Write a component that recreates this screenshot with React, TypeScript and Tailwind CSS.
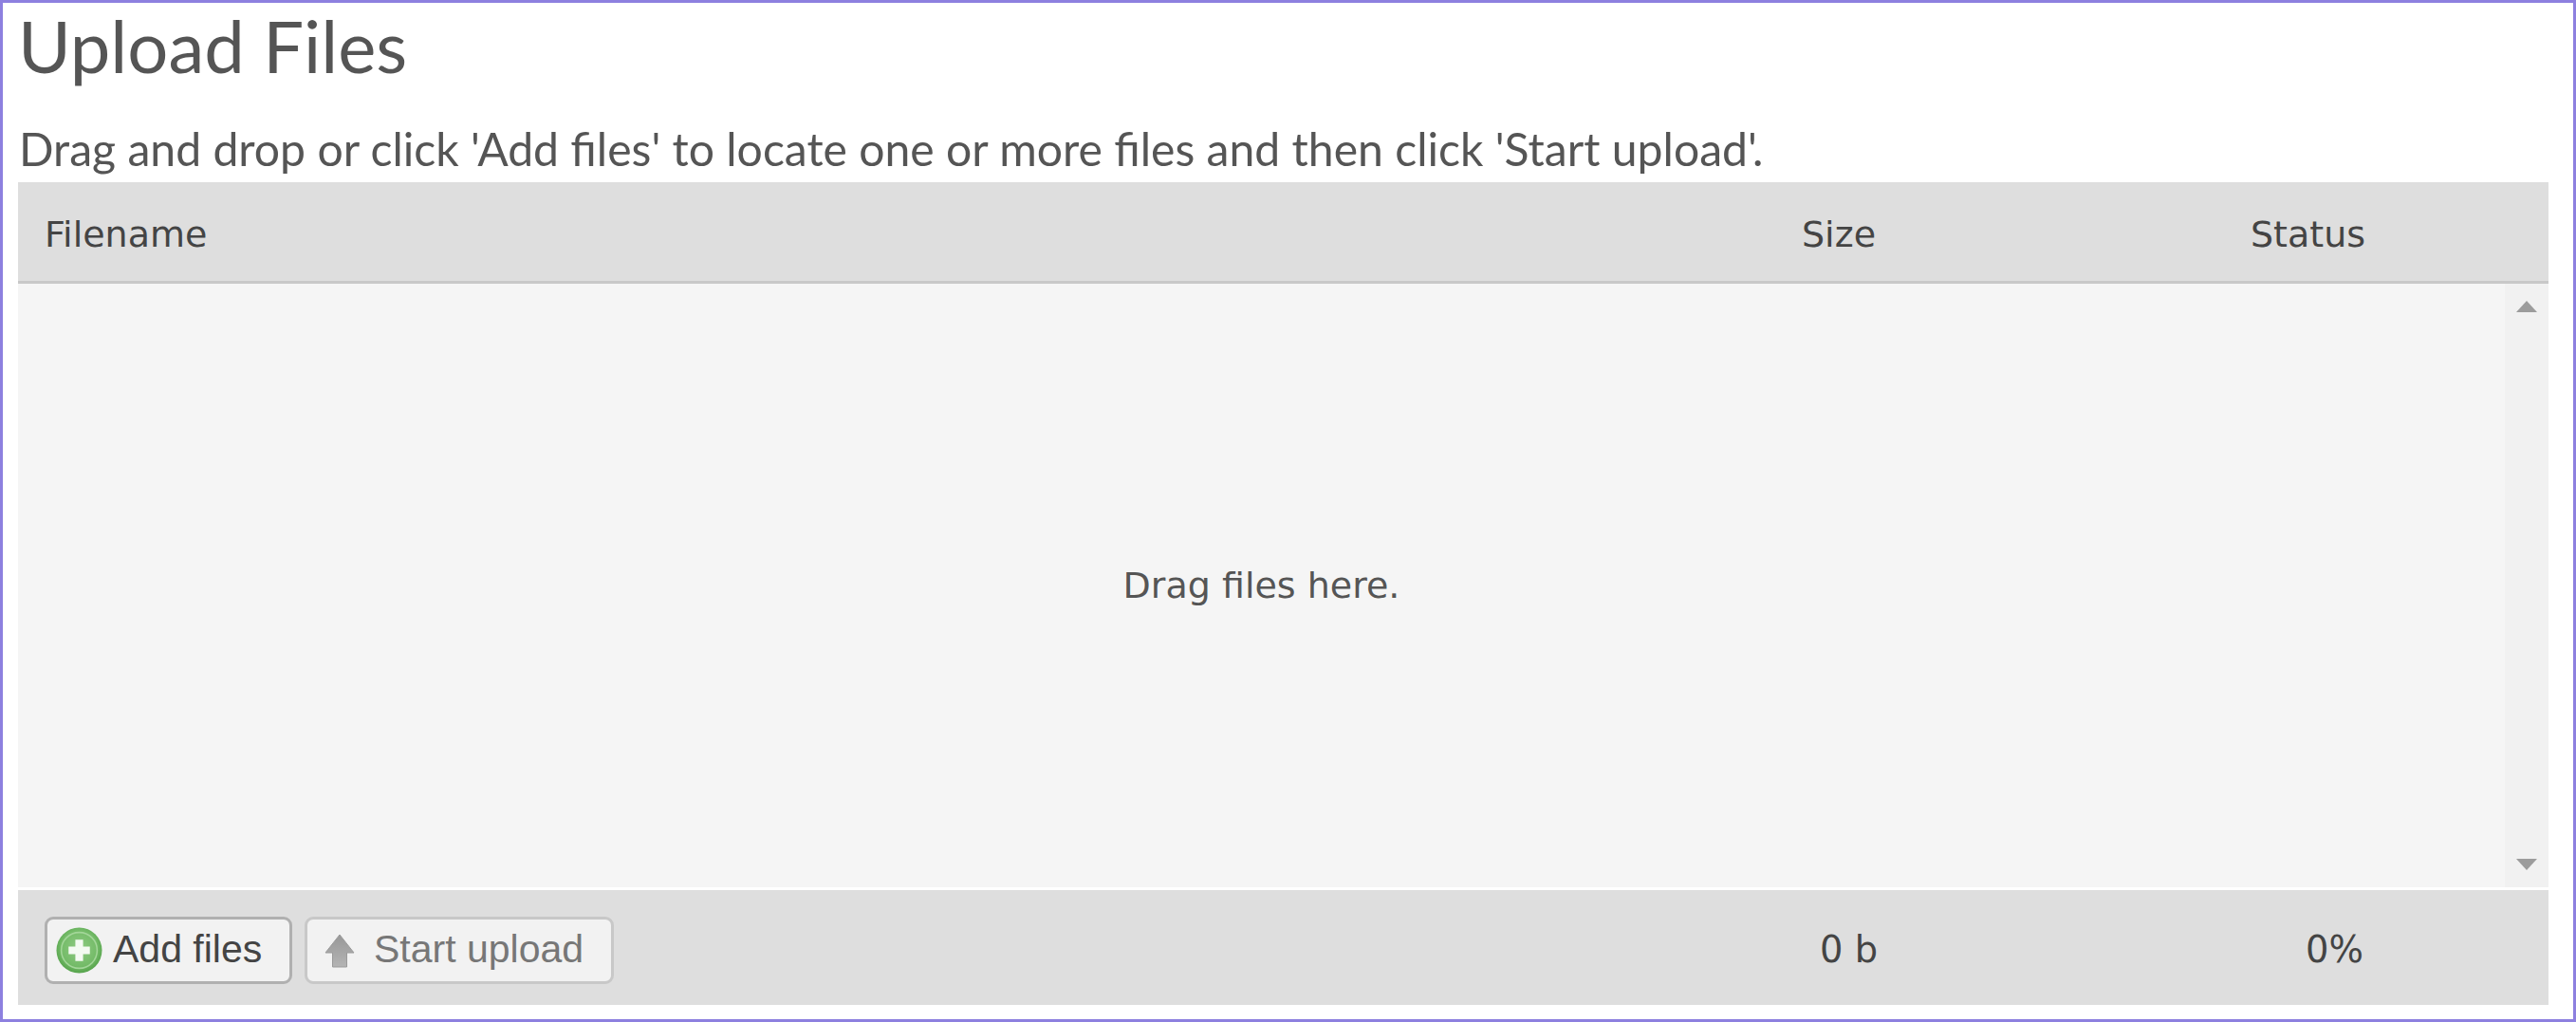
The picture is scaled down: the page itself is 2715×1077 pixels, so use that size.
import React from "react";

function AddIcon() {
  return (
    <svg width="49" height="49" viewBox="0 0 48 48" className="shrink-0 blur-[0.4px]">
      <defs>
        <radialGradient id="addFill" cx="50%" cy="45%" r="55%">
          <stop offset="0%" stopColor="#8fcb83" />
          <stop offset="72%" stopColor="#74bb68" />
          <stop offset="100%" stopColor="#55a34b" />
        </radialGradient>
      </defs>
      <circle cx="24" cy="24" r="23.5" fill="url(#addFill)" />
      <circle cx="24" cy="24" r="18.5" fill="none" stroke="#a3d699" strokeWidth="1.5" />
      <path d="M20 13h8v7h7v8h-7v7h-8v-7h-7v-8h7z" fill="#f4faf2" />
    </svg>
  );
}

function UploadIcon() {
  return (
    <svg width="32" height="36" viewBox="0 0 32 36" className="shrink-0 blur-[0.5px]">
      <defs>
        <linearGradient id="uploadFill" x1="0" y1="0" x2="0" y2="1">
          <stop offset="0%" stopColor="#979797" />
          <stop offset="100%" stopColor="#b4b4b4" />
        </linearGradient>
      </defs>
      <path d="M16 1 L31 20 H23.5 V35 H8.5 V20 H1 Z" fill="url(#uploadFill)" stroke="#9a9a9a" strokeWidth="1" strokeLinejoin="round" />
    </svg>
  );
}

function Triangle({ down }: { down?: boolean }) {
  return (
    <svg width="22" height="12" viewBox="0 0 22 12">
      <path d={down ? "M0 0H22L11 12Z" : "M11 0L22 12H0Z"} fill="#9c9c9c" />
    </svg>
  );
}

export default function App() {
  return (
    <div className="flex h-[1077px] w-full flex-col border-[3px] border-[#8d80df] bg-white pl-4 pr-[26px] text-[#555555]">
      <h1 className="h-[122px] font-['Lato',sans-serif] text-[76px] leading-[90px]">
        Upload Files
      </h1>
      <p className="h-[67px] pl-px font-['Lato',sans-serif] text-[48.1px] leading-[63px]">
        Drag and drop or click 'Add files' to locate one or more files and then click 'Start upload'.
      </p>
      <div className="flex h-[107px] items-center border-b-[3px] border-[#c8c8c8] bg-[#dedede] pt-[6px] font-['DejaVu_Sans',sans-serif] text-[38px] text-[#444444]">
        <div className="flex-1 pl-7">Filename</div>
        <div className="w-[473px]">Size</div>
        <div className="w-[314px]">Status</div>
      </div>
      <div className="flex h-[636px] bg-[#f5f5f5]">
        <div className="flex flex-1 items-center justify-center font-['DejaVu_Sans',sans-serif] text-[38px] text-[#555555]">
          Drag files here.
        </div>
        <div className="flex w-[46px] flex-col items-center justify-between bg-[#f1f1f1] py-[18px]">
          <Triangle />
          <Triangle down />
        </div>
      </div>
      <div className="mt-[3px] flex h-[121px] items-center bg-[#dedede] pl-7">
        <div className="flex flex-1 gap-[13px] whitespace-nowrap pt-[6px]">
          <button className="flex h-[71px] w-[261px] shrink-0 items-center gap-[11px] rounded-[9px] border-[3px] border-[#b0b0b0] bg-[#f2f2f2] pl-[9px] font-['Liberation_Sans',sans-serif] text-[41px] text-[#444444]">
            <AddIcon />
            <span className="pb-[2px]">Add files</span>
          </button>
          <button className="flex h-[71px] w-[326px] shrink-0 items-center gap-[20px] rounded-[9px] border-[3px] border-[#c8c8c8] bg-[#f2f2f2] pl-[18px] font-['Liberation_Sans',sans-serif] text-[41px] text-[#777777]">
            <UploadIcon />
            <span className="pb-[2px]">Start upload</span>
          </button>
        </div>
        <div className="w-[454px] pt-[5px] font-['DejaVu_Sans',sans-serif] text-[38.4px] text-[#444444]">0 b</div>
        <div className="w-[314px] pl-[58px] pt-[5px] font-['DejaVu_Sans',sans-serif] text-[38.4px] text-[#444444]">0%</div>
      </div>
    </div>
  );
}
